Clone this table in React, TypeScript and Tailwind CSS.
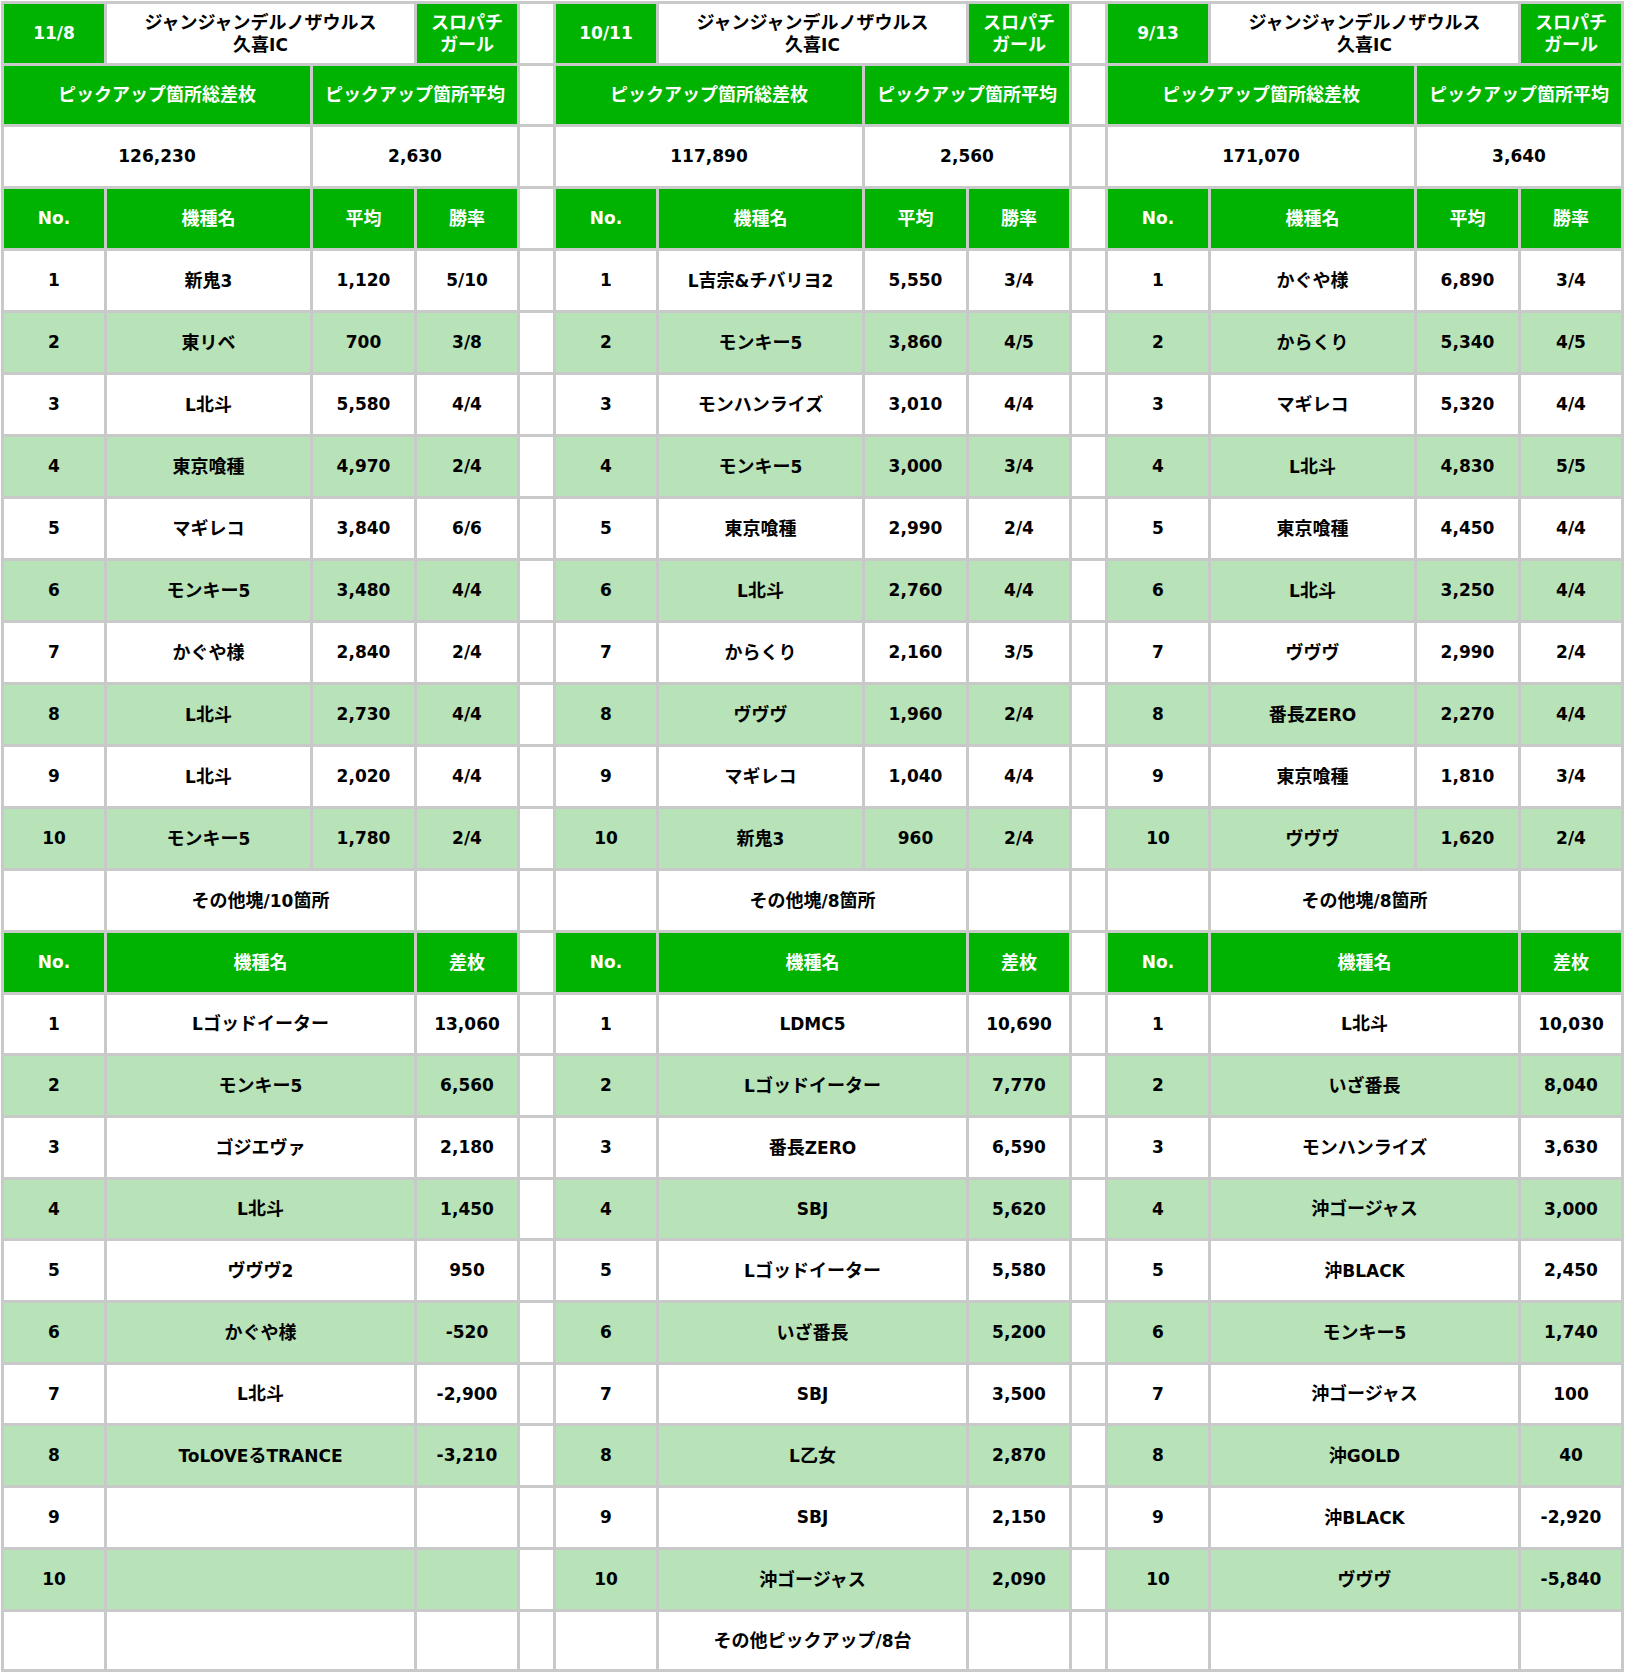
import React from 'react';
import clsx from 'clsx';

type Tone = 'g' | 'l' | 'w';
type Cell = { t?: string; wide?: boolean; tone: Tone };

type Report = {
  date: string;
  total: string;
  average: string;
  top: [string, string, string][];
  other: string;
  picks: [string, string][];
  last: string;
};

const reports: Report[] = [
  {
    date: '11/8',
    total: '126,230',
    average: '2,630',
    top: [
      ['新鬼3', '1,120', '5/10'],
      ['東リベ', '700', '3/8'],
      ['L北斗', '5,580', '4/4'],
      ['東京喰種', '4,970', '2/4'],
      ['マギレコ', '3,840', '6/6'],
      ['モンキー5', '3,480', '4/4'],
      ['かぐや様', '2,840', '2/4'],
      ['L北斗', '2,730', '4/4'],
      ['L北斗', '2,020', '4/4'],
      ['モンキー5', '1,780', '2/4'],
    ],
    other: 'その他塊/10箇所',
    picks: [
      ['Lゴッドイーター', '13,060'],
      ['モンキー5', '6,560'],
      ['ゴジエヴァ', '2,180'],
      ['L北斗', '1,450'],
      ['ヴヴヴ2', '950'],
      ['かぐや様', '-520'],
      ['L北斗', '-2,900'],
      ['ToLOVEるTRANCE', '-3,210'],
      ['', ''],
      ['', ''],
    ],
    last: '',
  },
  {
    date: '10/11',
    total: '117,890',
    average: '2,560',
    top: [
      ['L吉宗&チバリヨ2', '5,550', '3/4'],
      ['モンキー5', '3,860', '4/5'],
      ['モンハンライズ', '3,010', '4/4'],
      ['モンキー5', '3,000', '3/4'],
      ['東京喰種', '2,990', '2/4'],
      ['L北斗', '2,760', '4/4'],
      ['からくり', '2,160', '3/5'],
      ['ヴヴヴ', '1,960', '2/4'],
      ['マギレコ', '1,040', '4/4'],
      ['新鬼3', '960', '2/4'],
    ],
    other: 'その他塊/8箇所',
    picks: [
      ['LDMC5', '10,690'],
      ['Lゴッドイーター', '7,770'],
      ['番長ZERO', '6,590'],
      ['SBJ', '5,620'],
      ['Lゴッドイーター', '5,580'],
      ['いざ番長', '5,200'],
      ['SBJ', '3,500'],
      ['L乙女', '2,870'],
      ['SBJ', '2,150'],
      ['沖ゴージャス', '2,090'],
    ],
    last: 'その他ピックアップ/8台',
  },
  {
    date: '9/13',
    total: '171,070',
    average: '3,640',
    top: [
      ['かぐや様', '6,890', '3/4'],
      ['からくり', '5,340', '4/5'],
      ['マギレコ', '5,320', '4/4'],
      ['L北斗', '4,830', '5/5'],
      ['東京喰種', '4,450', '4/4'],
      ['L北斗', '3,250', '4/4'],
      ['ヴヴヴ', '2,990', '2/4'],
      ['番長ZERO', '2,270', '4/4'],
      ['東京喰種', '1,810', '3/4'],
      ['ヴヴヴ', '1,620', '2/4'],
    ],
    other: 'その他塊/8箇所',
    picks: [
      ['L北斗', '10,030'],
      ['いざ番長', '8,040'],
      ['モンハンライズ', '3,630'],
      ['沖ゴージャス', '3,000'],
      ['沖BLACK', '2,450'],
      ['モンキー5', '1,740'],
      ['沖ゴージャス', '100'],
      ['沖GOLD', '40'],
      ['沖BLACK', '-2,920'],
      ['ヴヴヴ', '-5,840'],
    ],
    last: '',
  },
];

const ROWS = 27;

// cells of one report for a given grid row
function rowCells(r: Report, i: number): Cell[] {
  if (i === 0)
    return [
      { t: r.date, tone: 'g' },
      { t: 'ジャンジャンデルノザウルス\n久喜IC', wide: true, tone: 'w' },
      { t: 'スロパチ\nガール', tone: 'g' },
    ];
  if (i === 1)
    return [
      { t: 'ピックアップ箇所総差枚', wide: true, tone: 'g' },
      { t: 'ピックアップ箇所平均', wide: true, tone: 'g' },
    ];
  if (i === 2)
    return [
      { t: r.total, wide: true, tone: 'w' },
      { t: r.average, wide: true, tone: 'w' },
    ];
  if (i === 3)
    return [
      { t: 'No.', tone: 'g' },
      { t: '機種名', tone: 'g' },
      { t: '平均', tone: 'g' },
      { t: '勝率', tone: 'g' },
    ];
  if (i >= 4 && i <= 13) {
    const n = i - 3;
    const [name, avg, rate] = r.top[n - 1];
    const tone: Tone = n % 2 === 0 ? 'l' : 'w';
    return [
      { t: String(n), tone },
      { t: name, tone },
      { t: avg, tone },
      { t: rate, tone },
    ];
  }
  if (i === 14)
    return [
      { tone: 'w' },
      { t: r.other, wide: true, tone: 'w' },
      { tone: 'w' },
    ];
  if (i === 15)
    return [
      { t: 'No.', tone: 'g' },
      { t: '機種名', wide: true, tone: 'g' },
      { t: '差枚', tone: 'g' },
    ];
  if (i >= 16 && i <= 25) {
    const n = i - 15;
    const [name, diff] = r.picks[n - 1];
    const tone: Tone = n % 2 === 0 ? 'l' : 'w';
    return [
      { t: String(n), tone },
      { t: name, wide: true, tone },
      { t: diff, tone },
    ];
  }
  return [
    { tone: 'w' },
    { t: r.last, wide: true, tone: 'w' },
    { tone: 'w' },
  ];
}

// japanese runs are set a touch larger than the latin ones
const Text: React.FC<{ s: string }> = ({ s }) => (
  <>
    {s.split(/([\u3000-\u9fff\uff00-\uffef]+)/).map((part, idx) =>
      idx % 2 === 1 ? (
        <span key={idx} className="text-[18px]">
          {part}
        </span>
      ) : (
        part
      )
    )}
  </>
);

const Box: React.FC<{ cell: Cell }> = ({ cell }) => (
  <div
    className={clsx(
      'flex items-center justify-center text-center whitespace-pre-line',
      cell.wide && 'col-span-2',
      cell.tone === 'g' && 'bg-[#00b300] text-white',
      cell.tone === 'l' && 'bg-[#b8e2b8] text-black',
      cell.tone === 'w' && 'bg-white text-black'
    )}
  >
    {cell.t ? (
      <div>
        <Text s={cell.t} />
      </div>
    ) : null}
  </div>
);

export default function App() {
  const cells: React.ReactNode[] = [];
  for (let i = 0; i < ROWS; i++) {
    reports.forEach((r, k) => {
      rowCells(r, i).forEach((c, j) => cells.push(<Box key={`${i}-${k}-${j}`} cell={c} />));
      if (k < reports.length - 1) cells.push(<div key={`${i}-${k}-gap`} className="bg-white" />);
    });
  }

  return (
    <div className="min-h-screen bg-white pt-px pl-px">
      <div
        className="grid w-fit gap-[3px] p-[3px] bg-[#c9c9c9] font-['DejaVu_Sans','Noto_Sans_CJK_JP',sans-serif] font-bold text-[17px] leading-[21px]
        grid-cols-[100px_203px_101px_100px_33px_100px_203px_101px_100px_33px_100px_203px_101px_100px]
        grid-rows-[59px_58px_59px_59px_repeat(11,59px)_59px_58px_59px_59px_58px_59px_59px_58px_59px_59px_59px_57px]"
      >
        {cells}
      </div>
    </div>
  );
}
